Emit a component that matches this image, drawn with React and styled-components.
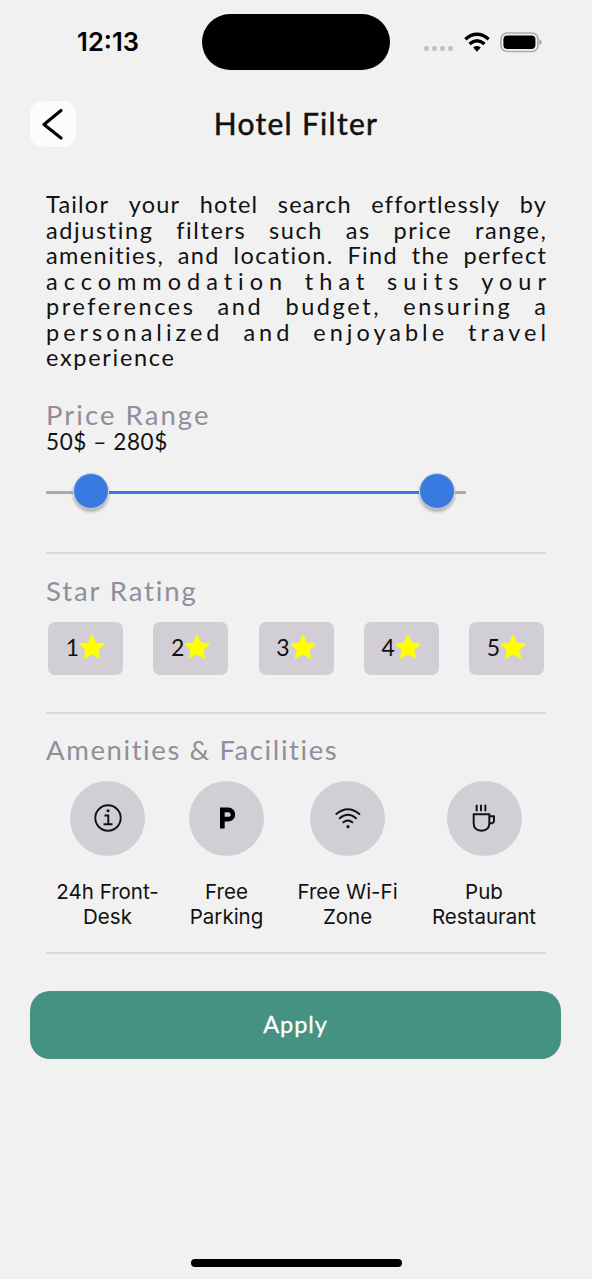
import React from 'react';
import styled, { createGlobalStyle } from 'styled-components';
import { MdLocalParking } from 'react-icons/md';

const GlobalStyle = createGlobalStyle`
  * { box-sizing: border-box; }
  body { margin: 0; background: #fff; }
  button { font: inherit; border: 0; padding: 0; }
  p, h1, h2 { margin: 0; font-weight: 400; }
`;

const Screen = styled.div`
  display: flex;
  flex-direction: column;
  width: 592px;
  height: 1279px;
  background: #f1f1f1;
  color: #111;
  font-family: Lato, 'Open Sans', sans-serif;
  overflow: hidden;
`;

const StatusBar = styled.header`
  display: grid;
  grid-template-columns: 202px 188px 1fr;
  height: 101px;
  padding-top: 14px;
  align-items: start;
`;

const Time = styled.span`
  padding: 13px 0 0 14px;
  text-align: center;
  font: 600 25.5px/30px Inter, sans-serif;
  letter-spacing: 0;
  color: #000;
`;

const Island = styled.div`
  height: 56px;
  border-radius: 28px;
  background: #000;
`;

const Indicators = styled.div`
  display: flex;
  align-items: center;
  height: 56px;
  padding-left: 34px;
`;

const SignalDots = styled.div`
  display: flex;
  gap: 3px;
  padding-top: 13px;
  margin-right: 11px;
`;

const Dot = styled.i`
  width: 5px;
  height: 5px;
  border-radius: 2px;
  background: #c4c4c4;
`;

const Header = styled.div`
  display: grid;
  grid-template-columns: 46px 1fr 46px;
  align-items: center;
  height: 46px;
  padding: 0 30px;
`;

const BackButton = styled.button`
  display: flex;
  align-items: center;
  justify-content: center;
  height: 46px;
  border-radius: 13px;
  background: #fcfcfc;
`;

const Title = styled.h1`
  padding-bottom: 3px;
  text-align: center;
  font-size: 30px;
  line-height: 36px;
  letter-spacing: 1.3px;
  -webkit-text-stroke: 0.5px currentColor;
`;

const Content = styled.main`
  display: flex;
  flex-direction: column;
  padding: 45px 46px 0;
`;

const Intro = styled.p`
  display: flex;
  flex-direction: column;
  font-size: 23.5px;
  line-height: 25.5px;
`;

const IntroLine = styled.span`
  display: flex;
  justify-content: ${(p) => (p.$last ? 'flex-start' : 'space-between')};
  white-space: nowrap;
  letter-spacing: ${(p) => p.$tracking}px;
  margin-right: ${(p) => -p.$tracking}px;
`;

const Section = styled.section`
  display: flex;
  flex-direction: column;
  height: ${(p) => p.$height}px;
  padding-top: ${(p) => p.$top}px;
  border-bottom: 2px solid #d9d9dd;
`;

const SectionTitle = styled.h2`
  font-size: 27.5px;
  line-height: 30px;
  letter-spacing: ${(p) => p.$tracking}px;
  color: #918e9b;
  white-space: nowrap;
`;

const PriceValue = styled.p`
  font-size: 22.5px;
  line-height: 24px;
  letter-spacing: 0.6px;
`;

const Slider = styled.div`
  display: flex;
  align-items: center;
  width: 420px;
  height: 38px;
  margin-top: 18px;
`;

const Track = styled.div`
  width: ${(p) => p.$width}px;
  height: 3px;
  margin-top: 3px;
  background: ${(p) => (p.$active ? '#397ae0' : '#aaa')};
`;

const Thumb = styled.div`
  width: 36px;
  height: 36px;
  flex: none;
  border: 1px solid #ccd3df;
  border-radius: 50%;
  background: #397ae0;
  box-shadow: 0 3px 3px rgba(0, 0, 0, 0.25);
`;

const Ratings = styled.div`
  display: flex;
  justify-content: space-between;
  padding: 0 2px;
  margin-top: 16px;
`;

const RatingChip = styled.button`
  display: flex;
  align-items: center;
  justify-content: center;
  width: 75px;
  height: 53px;
  padding-bottom: 3px;
  border-radius: 7px;
  background: #d1ced5;
  color: #111;
  font-size: 23px;
`;

const Amenities = styled.div`
  display: flex;
  gap: 33px;
  padding-left: 10px;
  margin-top: 16px;
`;

const Amenity = styled.div`
  display: flex;
  flex-direction: column;
  align-items: center;
  width: ${(p) => p.$width}px;
`;

const AmenityIcon = styled.div`
  display: flex;
  align-items: center;
  justify-content: center;
  width: 75px;
  height: 75px;
  flex: none;
  border-radius: 50%;
  background: #d1ced5;
  color: #000;
`;

const AmenityLabel = styled.span`
  margin-top: 23px;
  text-align: center;
  white-space: pre;
  font: 400 20.5px/25.8px Inter, sans-serif;
`;

const ApplyButton = styled.button`
  height: 68px;
  margin: 37px 31px 0 30px;
  padding-bottom: 2px;
  border-radius: 20px;
  background: #459282;
  color: #fff;
  font-size: 23.5px;
  letter-spacing: 0.9px;
  -webkit-text-stroke: 0.3px currentColor;
`;

const HomeIndicator = styled.div`
  width: 211px;
  height: 8px;
  margin: auto auto 12px 190.5px;
  border-radius: 4px;
  background: #000;
`;

const BatteryWrap = styled.span`
  display: flex;
  margin-left: 10px;
`;

const WifiStatusIcon = () => (
  <svg width="26" height="20" viewBox="0 0 78 60" fill="none" stroke="#000" strokeWidth="10">
    <path d="M4 21.500Q39-8 74 21.500" />
    <path d="M16.500 36Q39 17 61.500 36" />
    <path d="M27.500 46.500Q39 38 50.500 46.500L39 59Z" fill="#000" stroke="none" />
  </svg>
);

const BatteryIcon = () => (
  <svg width="42" height="21" viewBox="0 0 42 21">
    <rect x="1" y="1" width="37" height="18.5" rx="6" fill="none" stroke="#adadad" strokeWidth="1.7" />
    <rect x="3.4" y="3.4" width="32" height="13.6" rx="4" fill="#000" />
    <path d="M39.5 7.5q2 .7 2 2.8t-2 2.8z" fill="#999" />
  </svg>
);

const BackIcon = () => (
  <svg width="22" height="32" viewBox="0 0 22 32" fill="none" stroke="#000" strokeWidth="3.1" strokeLinecap="round" strokeLinejoin="round">
    <path d="M19 2.500 2 16.500 19 30" />
  </svg>
);

const StarIcon = () => (
  <svg width="26" height="25" viewBox="141 162 78 75" fill="#ff0" stroke="#ff0" strokeWidth="4" strokeLinejoin="round">
    <path d="M180 166 190.500 189.500 216 192 197 209 202.500 234 180 221 157.500 234 163 209 144 192 169.500 189.500Z" />
  </svg>
);

const InfoIcon = () => (
  <svg width="28" height="28" viewBox="0 0 28 28" fill="none" stroke="#111" strokeWidth="1.9">
    <circle cx="14" cy="14" r="12.7" />
    <path d="M10.500 11.500H14.300V20M9.500 20.300H18.500" />
    <circle cx="14" cy="6.700" r="1.500" fill="#111" stroke="none" />
  </svg>
);

const WifiIcon = () => (
  <svg width="26" height="24" viewBox="0 0 78 72" fill="none" stroke="#111" strokeWidth="5.8" strokeLinecap="round">
    <path d="M4 24Q39-5 73 24" />
    <path d="M14 37Q39 16 63 37" />
    <path d="M25 49Q39 38 52 49" />
    <circle cx="39" cy="62" r="4.8" fill="#111" stroke="none" />
  </svg>
);

const CupIcon = () => (
  <svg width="24" height="30" viewBox="486 71 72 90" fill="none" stroke="#111" strokeWidth="5.8">
    <path d="M500 76V96M513 76V96M526 76V96" />
    <path d="M491 105H538V131Q538 154 514.500 154Q491 154 491 131Z" strokeLinejoin="round" />
    <path d="M539 111H552V126L547 132H539" strokeLinejoin="round" />
  </svg>
);

const INTRO = [
  { text: 'Tailor your hotel search effortlessly by', tracking: 1.2 },
  { text: 'adjusting filters such as price range,', tracking: 1.6 },
  { text: 'amenities, and location. Find the perfect', tracking: 1.4 },
  { text: 'accommodation that suits your', tracking: 6 },
  { text: 'preferences and budget, ensuring a', tracking: 2.6 },
  { text: 'personalized and enjoyable travel', tracking: 4 },
  { text: 'experience', tracking: 1.7, last: true },
];

const AMENITIES = [
  { label: '24h Front-\nDesk', width: 103, icon: <InfoIcon /> },
  { label: 'Free\nParking', width: 69, icon: <MdLocalParking size={28} /> },
  { label: 'Free Wi-Fi\nZone', width: 107, icon: <WifiIcon /> },
  { label: 'Pub\nRestaurant', width: 100, icon: <CupIcon /> },
];

export default function App() {
  return (
    <>
      <GlobalStyle />
      <Screen>
        <StatusBar>
          <Time>12:13</Time>
          <Island />
          <Indicators>
            <SignalDots>
              <Dot /><Dot /><Dot /><Dot />
            </SignalDots>
            <WifiStatusIcon />
            <BatteryWrap><BatteryIcon /></BatteryWrap>
          </Indicators>
        </StatusBar>
        <Header>
          <BackButton aria-label="Back"><BackIcon /></BackButton>
          <Title>Hotel Filter</Title>
        </Header>
        <Content>
          <Intro>
            {INTRO.map((line) => (
              <IntroLine key={line.text} $tracking={line.tracking} $last={line.last}>
                {line.text.split(' ').map((word) => <span key={word}>{word}</span>)}
              </IntroLine>
            ))}
          </Intro>
          <Section $height={183} $top={29}>
            <SectionTitle $tracking={2.05}>Price Range</SectionTitle>
            <PriceValue>50$ – 280$</PriceValue>
            <Slider>
              <Track $width={27} />
              <Thumb />
              <Track $width={310} $active />
              <Thumb />
              <Track $width={11} />
            </Slider>
          </Section>
          <Section $height={160} $top={22}>
            <SectionTitle $tracking={1.9}>Star Rating</SectionTitle>
            <Ratings>
              {[1, 2, 3, 4, 5].map((n) => (
                <RatingChip key={n}>{n}<StarIcon /></RatingChip>
              ))}
            </Ratings>
          </Section>
          <Section $height={240} $top={21}>
            <SectionTitle $tracking={1.6}>Amenities &amp; Facilities</SectionTitle>
            <Amenities>
              {AMENITIES.map((a) => (
                <Amenity key={a.label} $width={a.width}>
                  <AmenityIcon>{a.icon}</AmenityIcon>
                  <AmenityLabel>{a.label}</AmenityLabel>
                </Amenity>
              ))}
            </Amenities>
          </Section>
        </Content>
        <ApplyButton>Apply</ApplyButton>
        <HomeIndicator />
      </Screen>
    </>
  );
}
